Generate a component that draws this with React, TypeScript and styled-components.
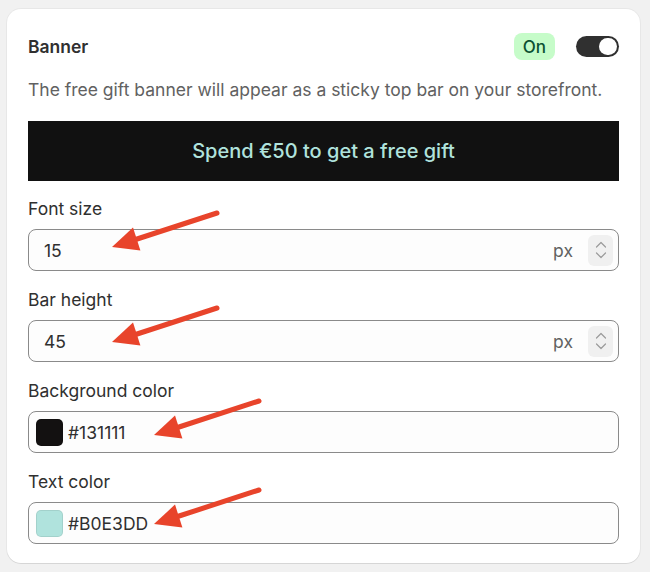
import React from "react";
import styled, { createGlobalStyle } from "styled-components";

const GlobalStyle = createGlobalStyle`
  html, body {
    margin: 0;
    padding: 0;
    background: #f1f1f1;
    font-family: Inter, "Noto Sans", sans-serif;
    -webkit-font-smoothing: antialiased;
  }
`;

const Page = styled.div`
  padding: 9px 10px 9px 7px;
`;

const Card = styled.div`
  width: 633px;
  box-sizing: border-box;
  background: #ffffff;
  border-radius: 14px;
  box-shadow: 0 1px 0 rgba(0, 0, 0, 0.07), 0 0 0 1px rgba(0, 0, 0, 0.04);
  padding: 24px 21px 19px 21px;
  display: flex;
  flex-direction: column;
`;

const Header = styled.div`
  display: flex;
  align-items: center;
  justify-content: space-between;
  height: 27px;
`;

const Title = styled.h2`
  margin: 0;
  font-size: 17.5px;
  font-weight: 600;
  color: #303030;
`;

const HeaderActions = styled.div`
  display: flex;
  align-items: center;
  gap: 21px;
`;

const Badge = styled.span`
  display: inline-flex;
  align-items: center;
  height: 27px;
  padding: 0 9px;
  border-radius: 8px;
  background: #c6fcc9;
  color: #0c5132;
  font-size: 17px;
  font-weight: 500;
`;

const Toggle = styled.div<{ on: boolean }>`
  width: 43px;
  height: 21px;
  border-radius: 11px;
  background: ${(p) => (p.on ? "#303030" : "#d4d4d4")};
  display: flex;
  align-items: center;
  justify-content: ${(p) => (p.on ? "flex-end" : "flex-start")};
  padding: 0 2px;
  box-sizing: border-box;
`;

const Knob = styled.span`
  width: 18px;
  height: 17px;
  border-radius: 9px;
  background: #ffffff;
`;

const Description = styled.p`
  margin: 20px 0 0 0;
  font-size: 17.5px;
  line-height: 20px;
  color: #616161;
`;

const Preview = styled.div<{ bg: string; fg: string; h: number; fs: number }>`
  margin-top: 21px;
  height: ${(p) => p.h + 15}px;
  background: ${(p) => p.bg};
  color: ${(p) => p.fg};
  font-size: ${(p) => p.fs + 5}px;
  font-weight: 500;
  display: flex;
  align-items: center;
  justify-content: center;
`;

const Fields = styled.div`
  display: flex;
  flex-direction: column;
  gap: 19px;
  margin-top: 18px;
`;

const Field = styled.div`
  position: relative;
  display: flex;
  flex-direction: column;
  gap: 10px;
`;

const Label = styled.label`
  font-size: 17.5px;
  line-height: 20px;
  color: #303030;
`;

const InputBox = styled.div`
  height: 42px;
  box-sizing: border-box;
  border: 1px solid #8a8a8a;
  border-radius: 8px;
  background: #fdfdfd;
  display: flex;
  align-items: center;
  padding: 0 5px 0 15px;
  font-size: 17.5px;
  color: #303030;
`;

const ColorBox = styled(InputBox)`
  padding-left: 7px;
  gap: 5px;
`;

const Value = styled.span`
  flex: 1;
`;

const Suffix = styled.span`
  color: #616161;
  margin-right: 15px;
`;

const Spinner = styled.div`
  width: 25px;
  height: 31px;
  border-radius: 6px;
  background: #f0f0f0;
  display: flex;
  flex-direction: column;
  align-items: center;
  justify-content: center;
  gap: 4px;
`;

const Swatch = styled.span<{ color: string }>`
  width: 27px;
  height: 27px;
  border-radius: 5px;
  box-sizing: border-box;
  background: ${(p) => p.color};
  border: 1px solid rgba(0, 0, 0, 0.08);
`;

const ArrowMark = styled.svg<{ x: number; y: number }>`
  position: absolute;
  left: ${(p) => p.x}px;
  top: ${(p) => p.y}px;
  width: 120px;
  height: 46px;
  pointer-events: none;
`;

const Arrow = ({ x, y }: { x: number; y: number }) => (
  <ArrowMark x={x} y={y} viewBox="0 0 120 46">
    <line x1="113" y1="4" x2="30" y2="31" stroke="#e8442b" strokeWidth="5" strokeLinecap="round" />
    <polygon points="8,38 29,18.6 36.4,41.4" fill="#e8442b" />
  </ArrowMark>
);

const Chevron = ({ up }: { up?: boolean }) => (
  <svg width="12" height="7" viewBox="0 0 12 7">
    <path
      d={up ? "M1.5 6 L6 1.5 L10.5 6" : "M1.5 1 L6 5.5 L10.5 1"}
      fill="none"
      stroke="#9a9a9a"
      strokeWidth="1.2"
      strokeLinecap="round"
      strokeLinejoin="round"
    />
  </svg>
);

interface NumField {
  label: string;
  value: number;
  arrow: { x: number; y: number };
}

interface ColorField {
  label: string;
  value: string;
  arrow: { x: number; y: number };
}

const numberFields: NumField[] = [
  { label: "Font size", value: 15, arrow: { x: 76, y: 10 } },
  { label: "Bar height", value: 45, arrow: { x: 76, y: 14 } },
];

const colorFields: ColorField[] = [
  { label: "Background color", value: "#131111", arrow: { x: 118, y: 16 } },
  { label: "Text color", value: "#B0E3DD", arrow: { x: 118, y: 14 } },
];

export default function App() {
  return (
    <>
      <GlobalStyle />
      <Page>
        <Card>
          <Header>
            <Title>Banner</Title>
            <HeaderActions>
              <Badge>On</Badge>
              <Toggle on>
                <Knob />
              </Toggle>
            </HeaderActions>
          </Header>
          <Description>
            The free gift banner will appear as a sticky top bar on your storefront.
          </Description>
          <Preview bg="#111111" fg="#B0E3DD" h={45} fs={15}>
            Spend €50 to get a free gift
          </Preview>
          <Fields>
            {numberFields.map((f) => (
              <Field key={f.label}>
                <Label>{f.label}</Label>
                <InputBox>
                  <Value>{f.value}</Value>
                  <Suffix>px</Suffix>
                  <Spinner>
                    <Chevron up />
                    <Chevron />
                  </Spinner>
                </InputBox>
                <Arrow x={f.arrow.x} y={f.arrow.y} />
              </Field>
            ))}
            {colorFields.map((f) => (
              <Field key={f.label}>
                <Label>{f.label}</Label>
                <ColorBox>
                  <Swatch color={f.value} />
                  <Value>{f.value}</Value>
                </ColorBox>
                <Arrow x={f.arrow.x} y={f.arrow.y} />
              </Field>
            ))}
          </Fields>
        </Card>
      </Page>
    </>
  );
}
